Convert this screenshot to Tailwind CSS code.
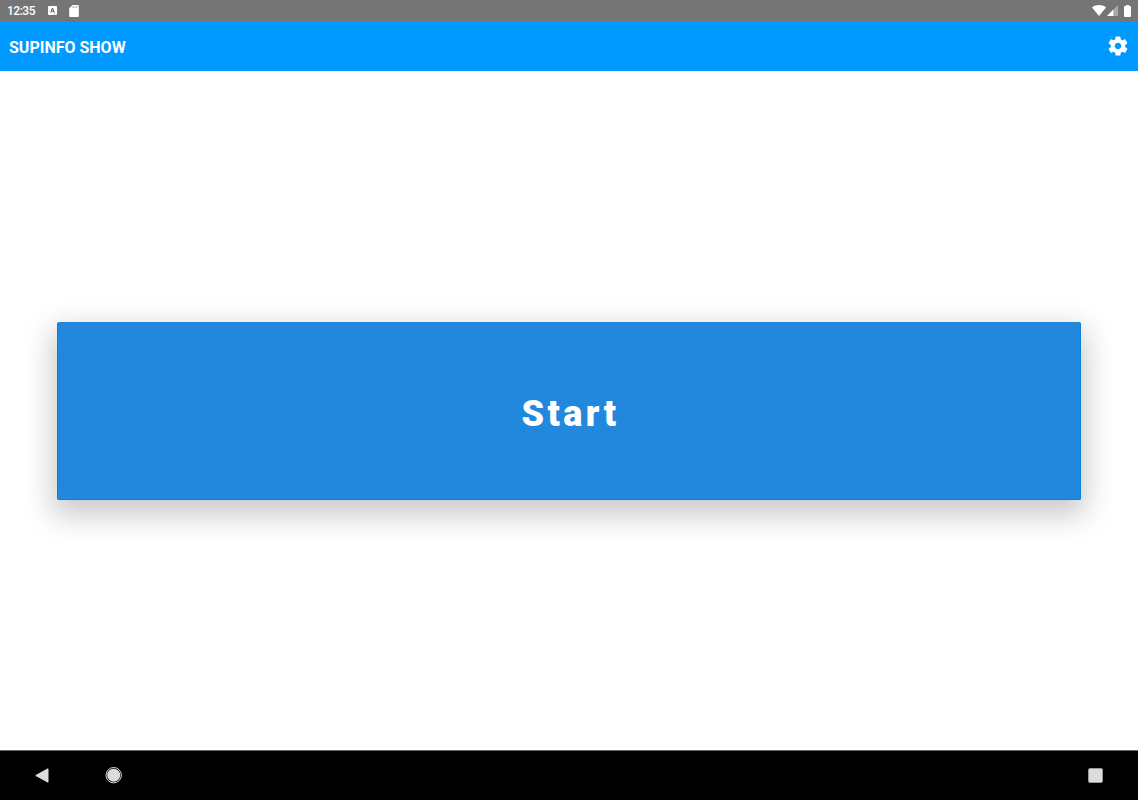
<!DOCTYPE html>
<html lang="en">
  <head>
    <meta charset="UTF-8" />
    <meta name="viewport" content="width=device-width, initial-scale=1.0" />
    <title>SUPINFO SHOW</title>
    <script src="https://cdn.jsdelivr.net/npm/@tailwindcss/browser@4"></script>
  </head>
  <body
    class="flex flex-col h-screen overflow-hidden bg-white text-white font-[Roboto,sans-serif]"
  >
    <!-- Status bar -->
    <div class="flex h-[21px] shrink-0 items-center bg-[#757575] pl-[7px] pr-[7px]">
      <span class="w-[41px] text-[12px] leading-[21px] font-medium tracking-[-0.5px] pt-px">12:35</span>
      <svg class="size-[9px]" viewBox="0 0 9 9">
        <rect width="9" height="9" rx="1" fill="#fff" />
        <path d="M2.7 6.6 4.5 2l1.8 4.6M3.3 5.2h2.4" fill="none" stroke="#555" stroke-width="1" />
        <path d="M5 8.1h2.8" stroke="#aaa" stroke-width=".6" />
      </svg>
      <svg class="ml-3 w-[10px] h-[12px]" viewBox="0 0 10 12.5">
        <path d="M3.5 0H9q1 0 1 1v10.5q0 1-1 1H1q-1 0-1-1v-8Z" fill="#fff" />
        <path d="M4 1.2v2M6 1.2v2M8 1.2v2" stroke="#999" stroke-width=".9" />
      </svg>
      <svg class="ml-auto w-[14px] h-[11px]" viewBox="0 0 14 11">
        <path d="M0 2.4C4-.8 10-.8 14 2.4L7 11Z" fill="#fff" />
      </svg>
      <svg class="ml-px w-[11px] h-[11px]" viewBox="0 0 11 11">
        <path d="M11 0v11H0Z" fill="#a8a8a8" />
        <path d="M6.4 4.6V11H0Z" fill="#fff" />
      </svg>
      <svg class="ml-[6px] w-[7px] h-[12px]" viewBox="0 0 7 12">
        <path d="M2 0h3v1h1q1 0 1 1v9q0 1-1 1H1q-1 0-1-1V2q0-1 1-1h1Z" fill="#fff" />
      </svg>
    </div>

    <!-- App bar -->
    <header class="flex h-[50px] shrink-0 items-center justify-between bg-[#0099ff] pl-[9px] pr-2">
      <h1 class="text-base leading-6 font-bold pt-1">SUPINFO SHOW</h1>
      <button aria-label="Settings">
        <svg class="size-6" viewBox="0 0 24 24" fill="#fff">
          <path
            d="M19.14 12.94c.04-.3.06-.61.06-.94 0-.32-.02-.64-.07-.94l2.03-1.58c.18-.14.23-.41.12-.61l-1.92-3.32c-.12-.22-.37-.29-.59-.22l-2.39.96c-.5-.38-1.03-.7-1.62-.94l-.36-2.54c-.04-.24-.24-.41-.48-.41h-3.84c-.24 0-.43.17-.47.41l-.36 2.54c-.59.24-1.13.57-1.62.94l-2.39-.96c-.22-.08-.47 0-.59.22L2.74 8.87c-.12.21-.08.47.12.61l2.03 1.58c-.05.3-.09.63-.09.94s.02.64.07.94l-2.03 1.58c-.18.14-.23.41-.12.61l1.92 3.32c.12.22.37.29.59.22l2.39-.96c.5.38 1.03.7 1.62.94l.36 2.54c.05.24.24.41.48.41h3.84c.24 0 .44-.17.47-.41l.36-2.54c.59-.24 1.13-.56 1.62-.94l2.39.96c.22.08.47 0 .59-.22l1.92-3.32c.12-.22.07-.47-.12-.61l-2.01-1.58ZM12 15.3c-1.82 0-3.3-1.48-3.3-3.3s1.48-3.3 3.3-3.3 3.3 1.48 3.3 3.3-1.48 3.3-3.3 3.3Z"
          />
        </svg>
      </button>
    </header>

    <!-- Start button -->
    <main class="flex flex-1 items-center px-[57px]">
      <button
        class="h-[178px] w-full rounded-xs border border-[#0c7fdc] border-t-[#2288dd] bg-[#2288dd] pt-1.5 pl-[3px] text-4xl font-black tracking-[3.4px] shadow-[0_11px_30px_4px_rgba(0,0,0,0.22)]"
      >
        Start
      </button>
    </main>

    <!-- Navigation bar -->
    <nav class="flex h-[50px] shrink-0 items-center border-t border-[#666] bg-black pl-[35px] pr-[35px]">
      <svg class="w-[14px] h-[15px]" viewBox="0 0 14 15">
        <path d="M13 .8v13.4L.8 7.5Z" fill="#dcdcdc" stroke="#dcdcdc" stroke-width="1" stroke-linejoin="round" />
      </svg>
      <svg class="ml-14 size-[17px]" viewBox="0 0 17 17">
        <circle cx="8.7" cy="8.2" r="6.5" fill="#dcdcdc" />
        <circle cx="8.7" cy="8.2" r="7.7" fill="none" stroke="#dcdcdc" stroke-width="1" />
      </svg>
      <div class="ml-auto size-[15px] rounded-xs border border-[#999] bg-[#dcdcdc]"></div>
    </nav>
  </body>
</html>
